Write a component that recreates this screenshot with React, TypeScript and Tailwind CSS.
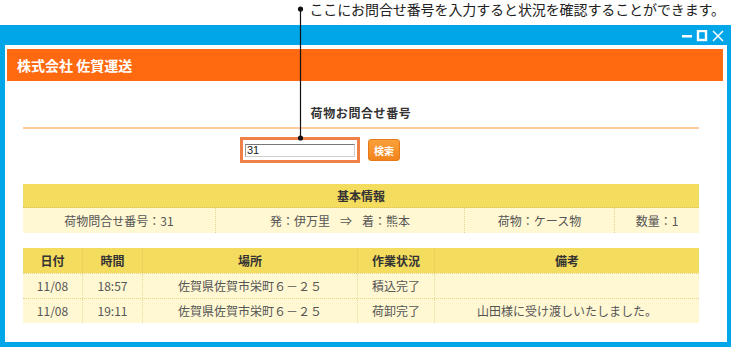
import React from "react";

const font = { fontFamily: '"Noto Sans CJK JP", "Noto Sans", sans-serif' };

const history = [
  { date: "11/08", time: "18:57", place: "佐賀県佐賀市栄町６－２５", status: "積込完了", note: "" },
  { date: "11/08", time: "19:11", place: "佐賀県佐賀市栄町６－２５", status: "荷卸完了", note: "山田様に受け渡しいたしました。" },
];

const TitleIcons = () => (
  <svg width="46" height="12" viewBox="0 0 46 12" className="text-white">
    <rect x="2" y="5" width="10" height="2.5" fill="currentColor" />
    <rect x="18" y="1" width="8" height="9" fill="none" stroke="currentColor" strokeWidth="2.4" />
    <path d="M33 1 L43 11 M43 1 L33 11" stroke="currentColor" strokeWidth="1.5" />
  </svg>
);

export default function App() {
  return (
    <div className="relative w-[731px] h-[347px] bg-white overflow-hidden" style={font}>
      {/* callout */}
      <div className="h-[25px] flex justify-end items-start pr-[6px]">
        <span className="text-[14px] leading-[18px] text-[#222] tracking-[-0.1px]">
          ここにお問合せ番号を入力すると状況を確認することができます。
        </span>
      </div>

      {/* window */}
      <div className="h-[322px] bg-[#00a6e8] flex flex-col px-[5px] pr-[4px] pb-[5px]">
        <div className="h-[20px] flex justify-end items-center pr-[1px] pt-[2px]">
          <TitleIcons />
        </div>
        <div className="flex-1 bg-white pt-[4px] pl-[2px] pr-[4px]">
          <div className="h-[32px] bg-[#ff6a10] flex items-center pl-[10px]">
            <span className="text-white font-bold text-[14px]">株式会社 佐賀運送</span>
          </div>

          <div className="ml-[16px] w-[676px]">
            <div className="mt-[24px] pb-[6px] border-b-2 border-[#ffcb9c] text-center text-[12px] leading-[16px] font-bold text-[#333] tracking-[0.6px]">
              荷物お問合せ番号
            </div>

            <div className="mt-[8px] h-[26px] flex items-center pl-[217px] gap-[8px]">
              <div className="w-[120px] h-[26px] border-[3px] border-[#ef8048] flex items-center px-[2px]">
                <div className="w-full h-[13px] border border-[#cfcfcf] border-t-[#777] border-l-[#999] bg-white flex items-center text-[11px] text-[#222] leading-none pl-[1px]" style={{ fontFamily: '"Liberation Sans", Arial, sans-serif' }}>
                  31
                </div>
              </div>
              <div className="w-[32px] h-[22px] rounded-[3px] bg-gradient-to-b from-[#fba03a] to-[#f2841a] border border-[#e57a18] flex items-center justify-center text-white text-[10px] font-bold">
                検索
              </div>
            </div>

            {/* basic info */}
            <div className="mt-[21px] text-[12px]">
              <div className="h-[24px] bg-[#f4dc5e] flex items-center justify-center font-bold text-[#333] border-b border-dotted border-[#d9c35a]">
                基本情報
              </div>
              <div className="h-[25px] bg-[#fff8d3] grid grid-cols-[193px_249px_150px_84px] text-[#555]">
                <div className="flex items-center justify-center border-r border-dotted border-[#e2d48a]">荷物問合せ番号：31</div>
                <div className="flex items-center justify-center border-r border-dotted border-[#e2d48a]">
                  発：伊万里<span className="mx-[10px]">⇒</span>着：熊本
                </div>
                <div className="flex items-center justify-center border-r border-dotted border-[#e2d48a]">荷物：ケース物</div>
                <div className="flex items-center justify-center">数量：1</div>
              </div>
            </div>

            {/* history */}
            <div className="mt-[15px] text-[12px]">
              <div className="h-[25px] bg-[#f4dc5e] grid grid-cols-[60px_60px_215px_77px_264px] font-bold text-[#333]">
                {["日付", "時間", "場所", "作業状況", "備考"].map((h, i) => (
                  <div key={i} className={"flex items-center justify-center" + (i < 4 ? " border-r border-dotted border-[#e0c95a]" : "")}>
                    {h}
                  </div>
                ))}
              </div>
              {history.map((row, r) => (
                <div key={r} className="h-[25px] bg-[#fff8d3] grid grid-cols-[60px_60px_215px_77px_264px] text-[#555] border-t border-dotted border-[#e2d48a]">
                  {[row.date, row.time, row.place, row.status, row.note].map((c, i) => (
                    <div key={i} className={"flex items-center justify-center" + (i < 4 ? " border-r border-dotted border-[#e8dc9c]" : "")}>
                      {c}
                    </div>
                  ))}
                </div>
              ))}
            </div>
          </div>
        </div>
      </div>

      {/* callout pointer */}
      <svg className="absolute left-[296px] top-[5px]" width="9" height="137" viewBox="0 0 9 137">
        <line x1="4.5" y1="4" x2="4.5" y2="133" stroke="#111" strokeWidth="1.2" />
        <circle cx="4.5" cy="4" r="2.6" fill="#111" />
        <circle cx="4.5" cy="133" r="2.6" fill="#111" />
      </svg>
    </div>
  );
}
